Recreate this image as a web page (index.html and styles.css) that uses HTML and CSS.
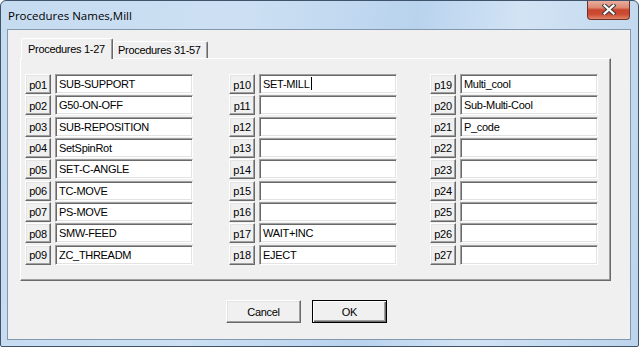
FILE: index.html
```html
<!DOCTYPE html>
<html lang="en">
<head>
    <meta charset="UTF-8">
    <title>Procedures Names,Mill</title>
    <link rel="stylesheet" href="styles.css">
</head>
<body>

<div class="window">
    <div class="titlebar">
        <span class="title">Procedures Names,Mill</span>
        <div class="close-btn">
            <svg width="14" height="11" viewBox="0 0 14 11">
                <path d="M2.5 1.5 L11.5 9.5 M11.5 1.5 L2.5 9.5" stroke="#3c3c3c" stroke-width="4.2" stroke-linecap="square"/>
                <path d="M2.5 1.5 L11.5 9.5 M11.5 1.5 L2.5 9.5" stroke="#ffffff" stroke-width="2.2" stroke-linecap="square"/>
            </svg>
        </div>
    </div>

    <div class="client">
        <!-- tab strip -->
        <div class="tabs">
            <div class="tab active">Procedures 1-27</div>
            <div class="tab">Procedures 31-57</div>
        </div>

        <div class="panel">
            <div class="cols">
                <div class="col">
                    <button class="pbtn">p01</button><div class="field">SUB-SUPPORT</div>
                    <button class="pbtn">p02</button><div class="field">G50-ON-OFF</div>
                    <button class="pbtn">p03</button><div class="field">SUB-REPOSITION</div>
                    <button class="pbtn">p04</button><div class="field">SetSpinRot</div>
                    <button class="pbtn">p05</button><div class="field">SET-C-ANGLE</div>
                    <button class="pbtn">p06</button><div class="field">TC-MOVE</div>
                    <button class="pbtn">p07</button><div class="field">PS-MOVE</div>
                    <button class="pbtn">p08</button><div class="field">SMW-FEED</div>
                    <button class="pbtn">p09</button><div class="field">ZC_THREADM</div>
                </div>
                <div class="col col-mid">
                    <button class="pbtn">p10</button><div class="field">SET-MILL<span class="caret"></span></div>
                    <button class="pbtn">p11</button><div class="field"></div>
                    <button class="pbtn">p12</button><div class="field"></div>
                    <button class="pbtn">p13</button><div class="field"></div>
                    <button class="pbtn">p14</button><div class="field"></div>
                    <button class="pbtn">p15</button><div class="field"></div>
                    <button class="pbtn">p16</button><div class="field"></div>
                    <button class="pbtn">p17</button><div class="field">WAIT+INC</div>
                    <button class="pbtn">p18</button><div class="field">EJECT</div>
                </div>
                <div class="col col-right">
                    <button class="pbtn">p19</button><div class="field">Multi_cool</div>
                    <button class="pbtn">p20</button><div class="field">Sub-Multi-Cool</div>
                    <button class="pbtn">p21</button><div class="field">P_code</div>
                    <button class="pbtn">p22</button><div class="field"></div>
                    <button class="pbtn">p23</button><div class="field"></div>
                    <button class="pbtn">p24</button><div class="field"></div>
                    <button class="pbtn">p25</button><div class="field"></div>
                    <button class="pbtn">p26</button><div class="field"></div>
                    <button class="pbtn">p27</button><div class="field"></div>
                </div>
            </div>
        </div>

        <div class="actions">
            <button class="dlg-btn">Cancel</button>
            <button class="dlg-btn default">OK</button>
        </div>
    </div>
</div>

</body>
</html>
```

FILE: styles.css
```css
body {
    margin: 0;
    padding: 0;
    font-family: 'Liberation Sans', Arial, sans-serif;
    font-size: 11px;
    font-weight: 400;
    letter-spacing: -0.3px;
    color: #000;
    background: #fff;
}

.window {
    width: 639px;
    height: 347px;
    box-sizing: border-box;
    border: 1px solid #3f536b;
    border-radius: 6px 6px 2px 2px;
    background: linear-gradient(100deg, #c5dbf0 0%, #cde0f3 35%, #b9d3ee 60%, #d2e3f4 75%, #bcd4ec 100%);
    display: flex;
    flex-direction: column;
    overflow: hidden;
}

.titlebar {
    height: 28px;
    display: flex;
    align-items: flex-start;
}

.title {
    margin: 7px 0 0 7px;
    font-family: 'Open Sans', 'Noto Sans', sans-serif;
    font-size: 11.5px;
    letter-spacing: 0;
    color: #000;
}

.close-btn {
    margin-left: auto;
    margin-right: 8px;
    margin-top: -1px;
    width: 43px;
    height: 20px;
    box-sizing: border-box;
    border: 1px solid #6e3328;
    border-top: none;
    border-radius: 0 0 4px 4px;
    background: linear-gradient(#eab2a4 0%, #dc8a74 40%, #c9452f 52%, #cc4b32 75%, #e08468 100%);
    display: flex;
    align-items: center;
    justify-content: center;
}

.close-btn svg {
    display: block;
}

.client {
    margin: 0 7px 6px 6px;
    height: 311px;
    box-sizing: border-box;
    border: 1px solid #8397ae;
    background: #f0f0f0;
    padding: 8px 0 0 12px;
}

/* tabs */
.tabs {
    display: flex;
    align-items: flex-end;
    margin-left: 1px;
    position: relative;
    z-index: 1;
}

.tab {
    height: 17px;
    box-sizing: border-box;
    padding: 0 6px 0 5px;
    border-top: 1px solid #fff;
    border-left: 1px solid #fff;
    border-right: 1px solid #696969;
    box-shadow: inset -1px 0 #a0a0a0;
    border-radius: 2px 2px 0 0;
    background: #f0f0f0;
    display: flex;
    align-items: center;
    white-space: nowrap;
}

.tab.active {
    height: 21px;
    width: 92px;
    margin-bottom: -1px;
    padding: 0 0 0 6px;
}

.tab + .tab {
    width: 95px;
    padding-left: 4px;
}

.panel {
    width: 591px;
    height: 223px;
    box-sizing: border-box;
    border: 1px solid;
    border-color: #fff #696969 #696969 #fff;
    box-shadow: inset -1px -1px #a0a0a0;
    padding: 15px 0 0 4px;
}

.cols {
    display: flex;
}

.col {
    display: grid;
    grid-template-columns: 26px 138px;
    grid-auto-rows: 20px;
    column-gap: 4px;
    row-gap: 1.333px;
}

.col-mid {
    margin-left: 36px;
}

.col-right {
    margin-left: 33px;
}

.pbtn {
    font: inherit;
    letter-spacing: inherit;
    color: #000;
    margin: 0;
    padding: 1px 0 0 0;
    height: 20px;
    box-sizing: border-box;
    background: #f0f0f0;
    border: 1px solid;
    border-color: #fff #696969 #696969 #fff;
    box-shadow: inset -1px -1px #a0a0a0, inset 1px 1px #e3e3e3;
    border-radius: 0;
}

.field {
    height: 20px;
    box-sizing: border-box;
    background: #fff;
    border: 1px solid;
    border-color: #a0a0a0 #fff #fff #a0a0a0;
    box-shadow: inset 1px 1px #696969, inset -1px -1px #e3e3e3;
    padding: 1px 0 0 3px;
    line-height: 17px;
    white-space: nowrap;
    overflow: hidden;
}

.caret {
    display: inline-block;
    width: 1px;
    height: 13px;
    background: #000;
    vertical-align: -2px;
    margin-left: 1px;
}

/* dialog buttons */
.actions {
    display: flex;
    gap: 11px;
    margin: 19px 0 0 206px;
}

.dlg-btn {
    font: inherit;
    letter-spacing: inherit;
    color: #000;
    margin: 0;
    padding: 0;
    width: 75px;
    height: 23px;
    box-sizing: border-box;
    background: #f0f0f0;
    border: 1px solid;
    border-color: #fff #696969 #696969 #fff;
    box-shadow: inset -1px -1px #a0a0a0, inset 1px 1px #e3e3e3;
    border-radius: 0;
}

.dlg-btn.default {
    border: 1px solid #000;
    box-shadow: inset 1px 1px #fff, inset -1px -1px #696969, inset -2px -2px #a0a0a0;
}
```
